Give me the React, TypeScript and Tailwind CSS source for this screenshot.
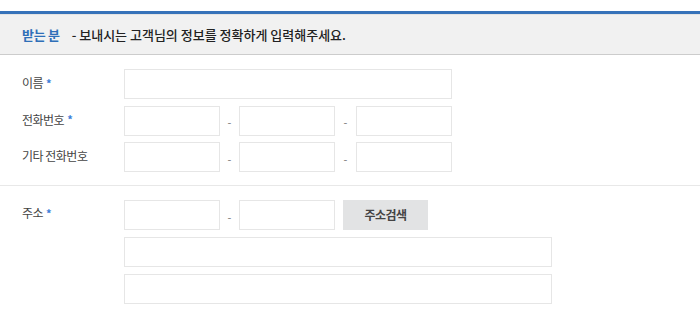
const font = { fontFamily: '"Noto Sans CJK KR", "Noto Sans", sans-serif' };

function Field({ className = "w-[96px]" }: { className?: string }) {
  return <input type="text" className={`h-[30px] border border-[#e6e6e6] bg-white outline-none ${className}`} />;
}

function Dash({ className = "w-[19px]" }: { className?: string }) {
  return <span className={`text-center text-[11px] text-[#777] pt-[4px] ${className}`}>-</span>;
}

function Label({ text, required }: { text: string; required?: boolean }) {
  return (
    <div className="w-[124px] shrink-0 h-[30px] flex items-center pl-[22px] -mt-[2px] text-[12px] text-[#444] tracking-[-0.5px]">
      {text}
      {required && <span className="ml-[3px] text-[11px] font-bold text-[#3b7dd8]">*</span>}
    </div>
  );
}

function PhoneRow() {
  return (
    <div className="flex items-center">
      <Field />
      <Dash />
      <Field />
      <Dash className="w-[21px]" />
      <Field />
    </div>
  );
}

export default function App() {
  return (
    <div className="w-[700px] h-[321px] bg-white pt-[11px]" style={font}>
      <div className="border-t-[3px] border-[#3672b9]">
        <div className="h-[41px] bg-[#f1f1f1] border-t border-[#e4e4e4] border-b border-b-[#cccccc] flex items-center pl-[22px] text-[13px]">
          <span className="font-bold text-[#2f6fb8] tracking-[-0.3px]">받는 분</span>
          <span className="ml-[12px] font-medium text-[#222]">- 보내시는 고객님의 정보를 정확하게 입력해주세요.</span>
        </div>
      </div>

      {/* 이름 / 전화번호 */}
      <div className="pt-[14px] pb-[13px] flex flex-col gap-[6.5px] border-b border-[#e8e8e8]">
        <div className="flex items-center">
          <Label text="이름" required />
          <Field className="w-[328px]" />
        </div>
        <div className="flex items-center">
          <Label text="전화번호" required />
          <PhoneRow />
        </div>
        <div className="flex items-center">
          <Label text="기타 전화번호" />
          <PhoneRow />
        </div>
      </div>

      {/* 주소 */}
      <div className="pt-[14px] flex">
        <Label text="주소" required />
        <div className="flex flex-col gap-[7px]">
          <div className="flex items-center">
            <Field />
            <Dash />
            <Field />
            <button className="ml-[8px] w-[85px] h-[30px] bg-[#e2e3e4] text-[12px] font-bold text-[#444] tracking-[-0.5px]">
              주소검색
            </button>
          </div>
          <Field className="w-[428px]" />
          <Field className="w-[428px]" />
        </div>
      </div>
    </div>
  );
}
